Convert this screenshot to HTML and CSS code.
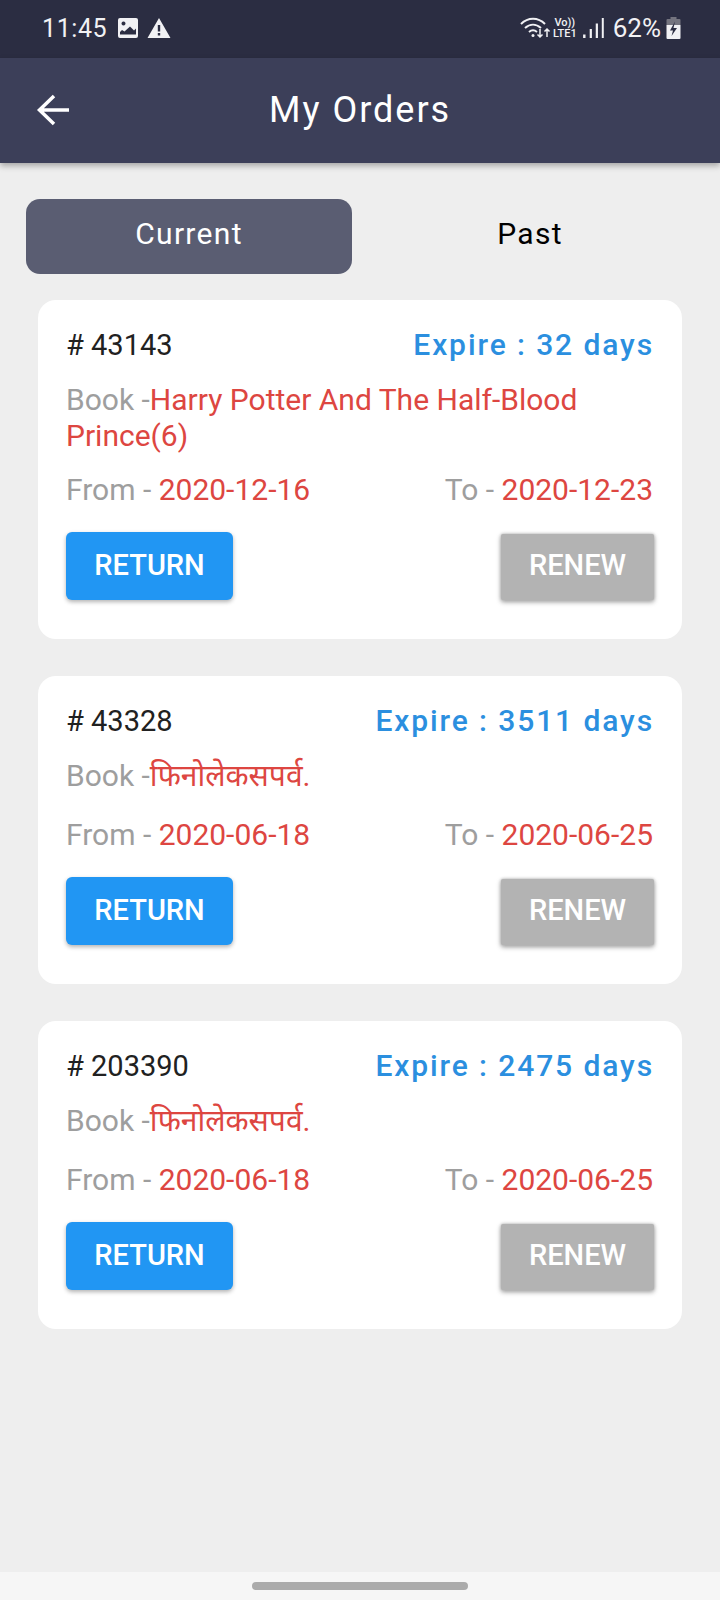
FILE: index.html
```html
<!DOCTYPE html>
<html lang="en">
<head>
    <meta charset="UTF-8">
    <title>My Orders</title>
    <link rel="stylesheet" href="styles.css">
</head>
<body>
<div class="status_bar">
    <div class="status_left">
        <span class="clock">11:45</span>
        <svg class="icon_image" width="22" height="22" viewBox="0 0 22 22">
            <path fill="#f1f1f4" fill-rule="evenodd" d="M3 1h16a2 2 0 0 1 2 2v16a2 2 0 0 1-2 2H3a2 2 0 0 1-2-2V3a2 2 0 0 1 2-2zM3 17.500h16v-6l-2 2-4-4-5.500 5-2.500-1.500-2 2zM6.500 4.500a2 2 0 1 0 .01 0z"/>
        </svg>
        <svg class="icon_warn" width="24" height="22" viewBox="0 0 24 22">
            <path fill="#f1f1f4" fill-rule="evenodd" d="M12 1l11.500 20H.500zM10.800 8v6.500h2.400V8zM10.800 16v2.500h2.400V16z"/>
        </svg>
    </div>
    <div class="status_right">
        <svg width="32" height="24" viewBox="0 0 32 24" fill="none" stroke="#f1f1f4" stroke-width="2">
            <path d="M1 8c7-7 17-7 24 0"/>
            <path d="M5 12c5-4.500 11-4.500 16 0"/>
            <path d="M9 16c3-2.500 5-2.500 8 0"/>
            <circle cx="13" cy="19.500" r="1.500" fill="#f1f1f4" stroke="none"/>
            <path d="M20 13v8M17.500 18.500l2.500 2.500 2.500-2.500M27 21v-8M24.500 15.500l2.500-2.500 2.500 2.500" stroke-width="1.500"/>
        </svg>
        <div class="volte"><span>Vo))</span><span>LTE1</span></div>
        <svg class="icon_signal" width="22" height="22" viewBox="0 0 20 20">
            <path fill="#f1f1f4" d="M1 16h2.200v3H1zM7 11h2v8H7zM12.500 6h2v13h-2zM18 1h1.800v18H18z"/>
        </svg>
        <span class="battery_text">62%</span>
        <svg width="15" height="22" viewBox="0 0 15 22">
            <path fill="#74747f" d="M4.500 0h6v2h3a1 1 0 0 1 1 1v5H.500V3a1 1 0 0 1 1-1h3z"/>
            <path fill="#f1f1f4" d="M.500 8h14v13a1 1 0 0 1-1 1h-12a1 1 0 0 1-1-1z"/>
            <path fill="#2b2d42" d="M9 4.500l-5 9h3l-1.500 5.500 5.500-8H7.500z"/>
        </svg>
    </div>
</div>
<div class="app_bar">
    <svg class="back" width="34" height="34" viewBox="0 0 34 34" fill="none" stroke="#ffffff" stroke-width="3.500">
        <path d="M33 17H4M18 3L3.500 17 18 31"/>
    </svg>
    <div class="app_title">My Orders</div>
</div>
<div class="content">
    <div class="tabs">
        <div class="tab tab_active">Current</div>
        <div class="tab">Past</div>
    </div>
    <div class="order">
        <div class="row">
            <span class="order_no"># 43143</span>
            <span class="expire">Expire : 32 days</span>
        </div>
        <div class="book"><span class="label">Book -</span><span class="value">Harry Potter And The Half-Blood Prince(6)</span></div>
        <div class="row dates">
            <span><span class="label">From - </span><span class="value">2020-12-16</span></span>
            <span><span class="label">To - </span><span class="value">2020-12-23</span></span>
        </div>
        <div class="row actions">
            <div class="btn btn_return">RETURN</div>
            <div class="btn btn_renew">RENEW</div>
        </div>
    </div>
    <div class="order">
        <div class="row">
            <span class="order_no"># 43328</span>
            <span class="expire">Expire : 3511 days</span>
        </div>
        <div class="book book_hindi"><span class="label">Book -</span><span class="value">फिनोलेकसपर्व.</span></div>
        <div class="row dates">
            <span><span class="label">From - </span><span class="value">2020-06-18</span></span>
            <span><span class="label">To - </span><span class="value">2020-06-25</span></span>
        </div>
        <div class="row actions">
            <div class="btn btn_return">RETURN</div>
            <div class="btn btn_renew">RENEW</div>
        </div>
    </div>
    <div class="order">
        <div class="row">
            <span class="order_no"># 203390</span>
            <span class="expire">Expire : 2475 days</span>
        </div>
        <div class="book book_hindi"><span class="label">Book -</span><span class="value">फिनोलेकसपर्व.</span></div>
        <div class="row dates">
            <span><span class="label">From - </span><span class="value">2020-06-18</span></span>
            <span><span class="label">To - </span><span class="value">2020-06-25</span></span>
        </div>
        <div class="row actions">
            <div class="btn btn_return">RETURN</div>
            <div class="btn btn_renew">RENEW</div>
        </div>
    </div>
</div>
<div class="nav_bar"><div class="nav_handle"></div></div>
</body>
</html>
```

FILE: styles.css
```css
* {
    box-sizing: border-box;
}

html, body {
    height: 1600px;
}

body {
    display: flex;
    flex-direction: column;
    margin: 0;
    background-color: #eeeeee;
    font-family: Roboto, "Noto Sans", sans-serif;
    overflow: hidden;
}

.status_bar {
    display: flex;
    align-items: center;
    justify-content: space-between;
    height: 58px;
    padding: 0 39px 2px 42px;
    background-color: #2b2d42;
    color: #f1f1f4;
}

.status_left, .status_right {
    display: flex;
    align-items: center;
}

.clock {
    font-size: 25px;
    letter-spacing: 0.6px;
    margin-right: 10px;
}

.icon_warn {
    margin-left: 8px;
}

.volte {
    display: flex;
    flex-direction: column;
    align-items: center;
    margin: 0 5px 0 1px;
    font-size: 11px;
    line-height: 11px;
    font-weight: 500;
}

.battery_text {
    margin: 0 5px 0 9px;
    font-size: 26px;
}

.app_bar {
    display: flex;
    align-items: center;
    position: relative;
    height: 105px;
    padding: 0 0 1px 36px;
    background-color: #3c3f59;
    box-shadow: rgba(0, 0, 0, 0.3) 0 3px 6px;
}

.back {
    margin-right: 199px;
}

.app_title {
    color: #ffffff;
    font-size: 36px;
    letter-spacing: 2px;
}

.content {
    flex: 1;
    padding: 36px 38px 0 26px;
}

.tabs {
    display: flex;
    height: 75px;
    margin-bottom: 26px;
}

.tab {
    display: flex;
    flex: none;
    align-items: center;
    justify-content: center;
    width: 326px;
    margin-right: 20px;
    padding-bottom: 6px;
    border-radius: 14px;
    color: #000000;
    font-size: 30px;
    letter-spacing: 1.3px;
}

.tab:last-child {
    width: 316px;
    margin-right: 0;
}

.tab_active {
    background-color: #5a5d72;
    color: #ffffff;
}

.order {
    margin: 0 0 37px 12px;
    padding: 27px 28px 39px 28px;
    border-radius: 18px;
    background-color: #ffffff;
}

.row {
    display: flex;
    align-items: center;
    justify-content: space-between;
}

.order_no {
    color: #212121;
    font-size: 29px;
}

.expire {
    color: #2b8fdf;
    font-size: 30px;
    font-weight: 500;
    letter-spacing: 1.9px;
}

.book {
    margin-top: 20px;
    font-size: 30px;
    line-height: 36px;
}

.book_hindi {
    margin-bottom: 5px;
}

.label {
    color: #9e9e9e;
}

.value {
    color: #dd4641;
}

.dates {
    margin-top: 18px;
    padding-right: 1px;
    font-size: 30px;
    line-height: 36px;
}

.book_hindi + .dates {
    margin-top: 23px;
}

.actions {
    margin-top: 24px;
}

.btn {
    display: flex;
    align-items: center;
    justify-content: center;
    height: 68px;
    padding-bottom: 2px;
    border-radius: 6px;
    color: #ffffff;
    font-size: 29px;
    font-weight: 500;
}

.btn_return {
    width: 167px;
    background-color: #2196f3;
    box-shadow: rgba(0, 0, 0, 0.3) 0 2px 4px;
}

.btn_renew {
    align-self: flex-end;
    width: 153px;
    height: 66px;
    padding-bottom: 4px;
    background-color: #b3b3b3;
    border-radius: 2px;
    box-shadow: #b3b3b3 0 0 3px, rgba(0, 0, 0, 0.4) 0 2px 5px;
}

.nav_bar {
    display: flex;
    align-items: center;
    justify-content: center;
    height: 28px;
    background-color: #f6f6f6;
}

.nav_handle {
    width: 216px;
    height: 8px;
    border-radius: 4px;
    background-color: #ababab;
}
```
